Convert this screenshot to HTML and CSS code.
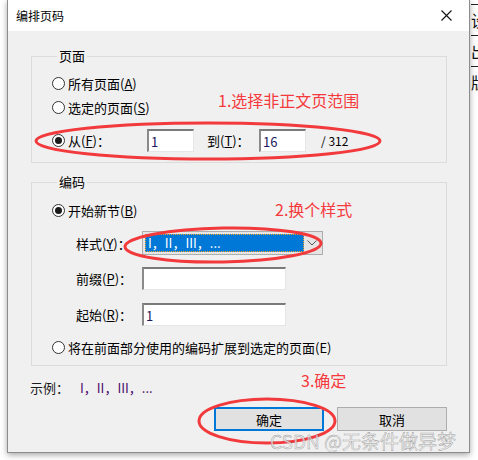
FILE: index.html
```html
<!DOCTYPE html>
<html lang="zh">
<head>
<meta charset="utf-8">
<title>编排页码</title>
<link rel="stylesheet" href="styles.css">
</head>
<body>
<div class="screen">
  <div class="dialog">
    <div class="titlebar">
      <span class="title">编排页码</span>
      <span class="close">
        <svg width="11" height="11" viewBox="0 0 11 11"><path d="M0.5 0.5L10.5 10.5M10.5 0.5L0.5 10.5" stroke="#111" stroke-width="1.1" fill="none"/></svg>
      </span>
    </div>
    <div class="body">
      <fieldset class="group group-pages">
        <legend>页面</legend>
        <div class="row r1"><span class="radio"></span><span>所有页面(<u>A</u>)</span></div>
        <div class="row r2"><span class="radio"></span><span>选定的页面(<u>S</u>)</span></div>
        <div class="row r3">
          <span class="from-label"><span class="radio checked"></span><span>从(<u>F</u>)：</span></span>
          <span class="input small">1</span>
          <span class="to-label">到(<u>T</u>)：</span>
          <span class="input small">16</span>
          <span class="total">/ 312</span>
        </div>
      </fieldset>
      <fieldset class="group group-num">
        <legend>编码</legend>
        <div class="row s1"><span class="radio checked"></span><span>开始新节(<u>B</u>)</span></div>
        <div class="row sub s2">
          <span class="lbl">样式(<u>Y</u>)：</span>
          <span class="combo"><span class="sel">I，II，III，...</span><span class="arrow"><svg width="10" height="6" viewBox="0 0 10 6"><path d="M0.5 0.5L5 5L9.5 0.5" stroke="#555" stroke-width="1" fill="none"/></svg></span></span>
        </div>
        <div class="row sub s3">
          <span class="lbl">前缀(<u>P</u>)：</span>
          <span class="input wide"></span>
        </div>
        <div class="row sub s4">
          <span class="lbl">起始(<u>R</u>)：</span>
          <span class="input wide">1</span>
        </div>
        <div class="row s5"><span class="radio"></span><span>将在前面部分使用的编码扩展到选定的页面(E)</span></div>
      </fieldset>
      <div class="example"><span class="ex-lbl">示例：</span><span class="ex-val">I，II，III，...</span></div>
      <div class="buttons">
        <span class="btn default">确定</span>
        <span class="btn">取消</span>
      </div>
    </div>
  </div>
  <div class="side">
    <div class="cell">设</div>
    <div class="cell">出</div>
    <div class="cell">版</div>
  </div>

  <div class="note n1">1.选择非正文页范围</div>
  <div class="note n2">2.换个样式</div>
  <div class="note n3">3.确定</div>
  <svg class="marks" width="478" height="460" viewBox="0 0 478 460">
    <ellipse cx="208" cy="141" rx="172" ry="18" fill="none" stroke="#f2393c" stroke-width="3"/>
    <ellipse cx="223" cy="245" rx="98" ry="17" fill="none" stroke="#f2393c" stroke-width="3" transform="rotate(-1 223 245)"/>
    <ellipse cx="267" cy="421" rx="68" ry="22" fill="none" stroke="#f2393c" stroke-width="3"/>
  </svg>
  <div class="watermark">CSDN @无条件做异梦</div>
</div>
</body>
</html>
```
FILE: styles.css
```css
html, body {
  margin: 0;
  padding: 0;
  background: #ffffff;
}
body {
  font-family: "Microsoft YaHei", "Noto Sans CJK SC", "Noto Sans", sans-serif;
  font-size: 13px;
  color: #000;
}
u { text-decoration: underline; text-underline-offset: 1px; }

.screen {
  position: relative;
  width: 478px;
  height: 460px;
  overflow: hidden;
  display: flex;
  align-items: flex-start;
  background: #fff;
}

.dialog {
  margin-left: 7px;
  width: 464px;
  height: 453px;
  box-sizing: border-box;
  border: 1px solid #8c8c8c;
  border-top: 0;
  background: #f0f0f0;
  box-shadow: 0 2px 6px rgba(0,0,0,0.35);
  display: flex;
  flex-direction: column;
  position: relative;
  z-index: 1;
}

.titlebar {
  height: 31px;
  background: #ffffff;
  display: flex;
  align-items: center;
  justify-content: space-between;
  padding-left: 8px;
  flex: none;
}
.title { font-size: 12px; line-height: 16px; }
.close {
  width: 46px;
  height: 31px;
  display: flex;
  align-items: center;
  justify-content: center;
  margin-right: -8px;
}
.close svg { margin-left: -16px; }

.body {
  padding: 17px 22px 0 23px;
  display: flex;
  flex-direction: column;
}

.group {
  margin: 0;
  border: 1px solid #dcdcdc;
  padding: 0 0 0 20px;
  min-width: 0;
}
.group legend {
  padding: 0 2px;
  margin-left: 5px;
  line-height: 16px;
  font-size: 13px;
}
.group-pages { padding-top: 9px; padding-bottom: 10px; }
.group-num { margin-top: 11px; padding-top: 10px; padding-bottom: 8px; }

.row {
  display: flex;
  align-items: center;
  height: 20px;
  line-height: 17px;
}
.r2 { margin-top: 4px; }
.r3 { margin-top: 12px; height: 23px; }

.s2 { margin-top: 11px; height: 24px; }
.s3 { margin-top: 12px; height: 23px; }
.s4 { margin-top: 13px; height: 23px; }
.s5 { margin-top: 11px; }
.sub { padding-left: 24px; }
.lbl { width: 66px; flex: none; }

.radio {
  width: 11px;
  height: 11px;
  border: 1px solid #333;
  border-radius: 50%;
  background: #fff;
  margin-right: 3px;
  flex: none;
  position: relative;
}
.radio.checked::after {
  content: "";
  position: absolute;
  left: 2px;
  top: 2px;
  width: 7px;
  height: 7px;
  border-radius: 50%;
  background: #1a1a1a;
}

.from-label { width: 95px; display: flex; align-items: center; flex: none; }
.to-label { width: 52px; margin-left: 13px; flex: none; }
.total { margin-left: 15px; color: #000; font-size: 12px; }

.input {
  box-sizing: border-box;
  height: 23px;
  background: #fff;
  border-top: 2px solid #7a7a7a;
  border-left: 2px solid #8a8a8a;
  border-right: 1px solid #e6e6e6;
  border-bottom: 1px solid #e6e6e6;
  padding-left: 2px;
  display: flex;
  align-items: center;
  color: #1c1a5c;
  font-size: 13px;
  flex: none;
}
.input.small { width: 47px; }
.input.wide { width: 144px; }

.combo {
  box-sizing: border-box;
  width: 181px;
  height: 24px;
  border: 1px solid #adadad;
  background: #e5e5e5;
  display: flex;
  align-items: center;
  padding: 2px;
  flex: none;
}
.sel {
  box-sizing: border-box;
  width: 159px;
  height: 18px;
  background: #0078d7;
  color: #fff;
  outline: 1px dotted #f5a623;
  outline-offset: -1px;
  padding-left: 3px;
  line-height: 18px;
  font-size: 13px;
}
.arrow {
  flex: 1;
  display: flex;
  justify-content: center;
  align-items: center;
}

.example {
  margin-top: 13px;
  height: 17px;
  line-height: 17px;
  display: flex;
  margin-left: -1px;
}
.ex-lbl { width: 50px; color: #1a1a1a; }
.ex-val { color: #4b0a6b; }

.buttons {
  margin-top: 11px;
  display: flex;
  justify-content: flex-end;
  gap: 13px;
}
.btn {
  box-sizing: border-box;
  width: 110px;
  height: 24px;
  background: #e1e1e1;
  border: 1px solid #adadad;
  display: flex;
  align-items: center;
  justify-content: center;
  font-size: 13px;
}
.btn.default {
  border: 2px solid #0078d7;
}

.side {
  width: 7px;
  margin-left: 1px;
  overflow: hidden;
  padding-top: 4px;
}
.cell {
  border-top: 1px solid #222;
  height: 30px;
  font-size: 16px;
  line-height: 30px;
  color: #111;
  width: 20px;
}

.note {
  position: absolute;
  z-index: 2;
  font-size: 16px;
  line-height: 18px;
  color: #f5393c;
  font-family: "Microsoft YaHei", "Noto Sans CJK SC", sans-serif;
}
.n1 { left: 218px; top: 91px; }
.n2 { left: 275px; top: 200px; }
.n3 { left: 301px; top: 371px; }

.marks {
  position: absolute;
  left: 0;
  top: 0;
  z-index: 3;
  pointer-events: none;
}

.watermark {
  position: absolute;
  z-index: 4;
  left: 270px;
  top: 433px;
  font-size: 19px;
  line-height: 15px;
  color: rgba(238,238,238,0.75);
  -webkit-text-stroke: 0.45px rgba(95,95,95,0.6);
  font-family: "Microsoft YaHei", "Noto Sans CJK SC", sans-serif;
  white-space: nowrap;
}
```
